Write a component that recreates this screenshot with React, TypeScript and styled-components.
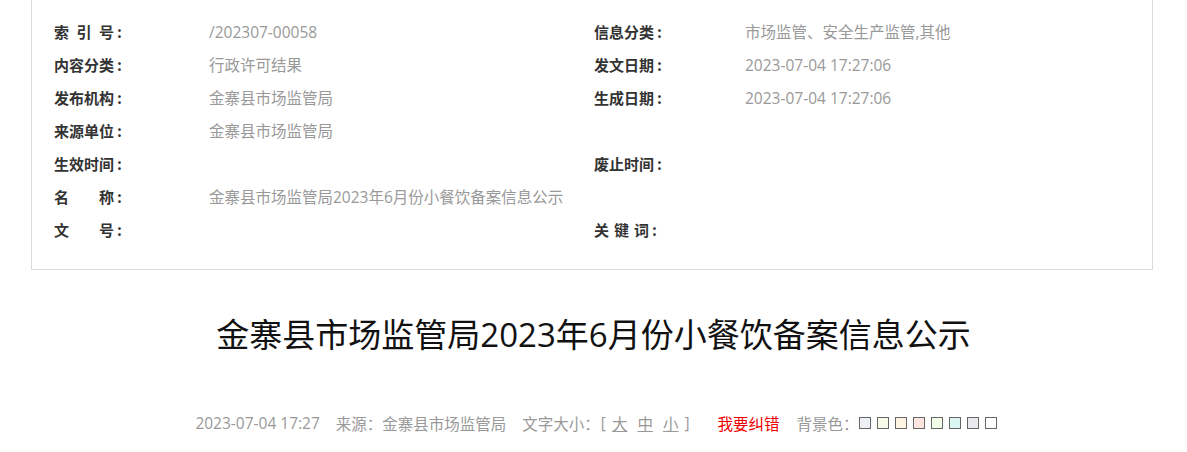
import React from "react";
import styled, { createGlobalStyle } from "styled-components";

const Global = createGlobalStyle`
  html, body { margin: 0; padding: 0; background: #fff; }
  body { font-family: "Open Sans", "Noto Sans CJK SC", sans-serif; }
`;

const Page = styled.div`
  width: 1187px;
  display: flex;
  flex-direction: column;
`;

const InfoBox = styled.div`
  margin-left: 31px;
  width: 1122px;
  box-sizing: border-box;
  border: 1px solid #dcdcdc;
  border-top: none;
  padding: 15px 0 23px 22px;
  display: grid;
  grid-template-columns: 155px 385px 151px 1fr;
  grid-auto-rows: 33px;
  align-items: center;
`;

const Label = styled.div`
  display: flex;
  align-items: center;
  color: #333;
  font-weight: bold;
  font-size: 15px;
  font-family: "Noto Sans CJK SC", sans-serif;
  white-space: nowrap;
`;

const LabelText = styled.span<{ $w: number }>`
  display: inline-flex;
  justify-content: space-between;
  width: ${(p) => p.$w}px;
`;

const Colon = styled.span`
  margin-left: 3px;
`;

const Value = styled.div`
  color: #999;
  font-size: 15.5px;
  white-space: nowrap;
`;

const Title = styled.h1`
  margin: 40px 0 0;
  text-align: center;
  font-size: 33px;
  line-height: 50px;
  font-weight: normal;
  color: #111;
`;

const Meta = styled.div`
  margin-top: 48px;
  display: flex;
  justify-content: center;
  align-items: center;
  height: 30px;
  font-size: 15.5px;
  color: #999;
  padding-left: 5px;
`;

const MetaItem = styled.span<{ $gap?: number }>`
  margin-right: ${(p) => p.$gap ?? 16}px;
  white-space: nowrap;
  display: inline-flex;
  align-items: center;
`;

const SizeLink = styled.a`
  color: #999;
  text-decoration: underline;
  margin: 0 5px;
  cursor: pointer;
`;

const Bracket = styled.span`
  margin: 0 1px;
`;

const Correct = styled.a`
  color: #e00;
  text-decoration: none;
  margin-right: 17px;
  cursor: pointer;
`;

const Swatches = styled.span`
  display: inline-flex;
  gap: 6px;
`;

const Swatch = styled.span<{ $c: string }>`
  width: 10px;
  height: 10px;
  border: 1px solid #666;
  background: ${(p) => p.$c};
  cursor: pointer;
`;

const Lab = ({ chars, w }: { chars: string[]; w: number }) => (
  <Label>
    <LabelText $w={w}>
      {chars.map((c, i) => (
        <span key={i}>{c}</span>
      ))}
    </LabelText>
    <Colon>:</Colon>
  </Label>
);

const rows: [string[], number, string, string[], number, string][] = [
  [["索", "引", "号"], 60, "/202307-00058", ["信", "息", "分", "类"], 60, "市场监管、安全生产监管,其他"],
  [["内", "容", "分", "类"], 60, "行政许可结果", ["发", "文", "日", "期"], 60, "2023-07-04 17:27:06"],
  [["发", "布", "机", "构"], 60, "金寨县市场监管局", ["生", "成", "日", "期"], 60, "2023-07-04 17:27:06"],
  [["来", "源", "单", "位"], 60, "金寨县市场监管局", [], 0, ""],
  [["生", "效", "时", "间"], 60, "", ["废", "止", "时", "间"], 60, ""],
  [["名", "称"], 60, "金寨县市场监管局2023年6月份小餐饮备案信息公示", [], 0, ""],
  [["文", "号"], 60, "", ["关", "键", "词"], 55, ""],
];

const colors = ["#edf0f5", "#f7fae8", "#fff3e3", "#fde6e0", "#f1fde4", "#dcf7f1", "#e9e9ee", "#ffffff"];

export default function App() {
  return (
    <Page>
      <Global />
      <InfoBox>
        {rows.map((r, i) => (
          <React.Fragment key={i}>
            <Lab chars={r[0]} w={r[1]} />
            <Value>{r[2]}</Value>
            {r[3].length ? <Lab chars={r[3]} w={r[4]} /> : <div />}
            <Value>{r[5]}</Value>
          </React.Fragment>
        ))}
      </InfoBox>
      <Title>金寨县市场监管局2023年6月份小餐饮备案信息公示</Title>
      <Meta>
        <MetaItem>2023-07-04 17:27</MetaItem>
        <MetaItem>来源：金寨县市场监管局</MetaItem>
        <MetaItem $gap={27}>
          文字大小：<Bracket>[</Bracket>
          <SizeLink>大</SizeLink>
          <SizeLink>中</SizeLink>
          <SizeLink>小</SizeLink>
          <Bracket>]</Bracket>
        </MetaItem>
        <Correct>我要纠错</Correct>
        <MetaItem $gap={0}>
          背景色：
          <Swatches>
            {colors.map((c) => (
              <Swatch key={c} $c={c} />
            ))}
          </Swatches>
        </MetaItem>
      </Meta>
    </Page>
  );
}
